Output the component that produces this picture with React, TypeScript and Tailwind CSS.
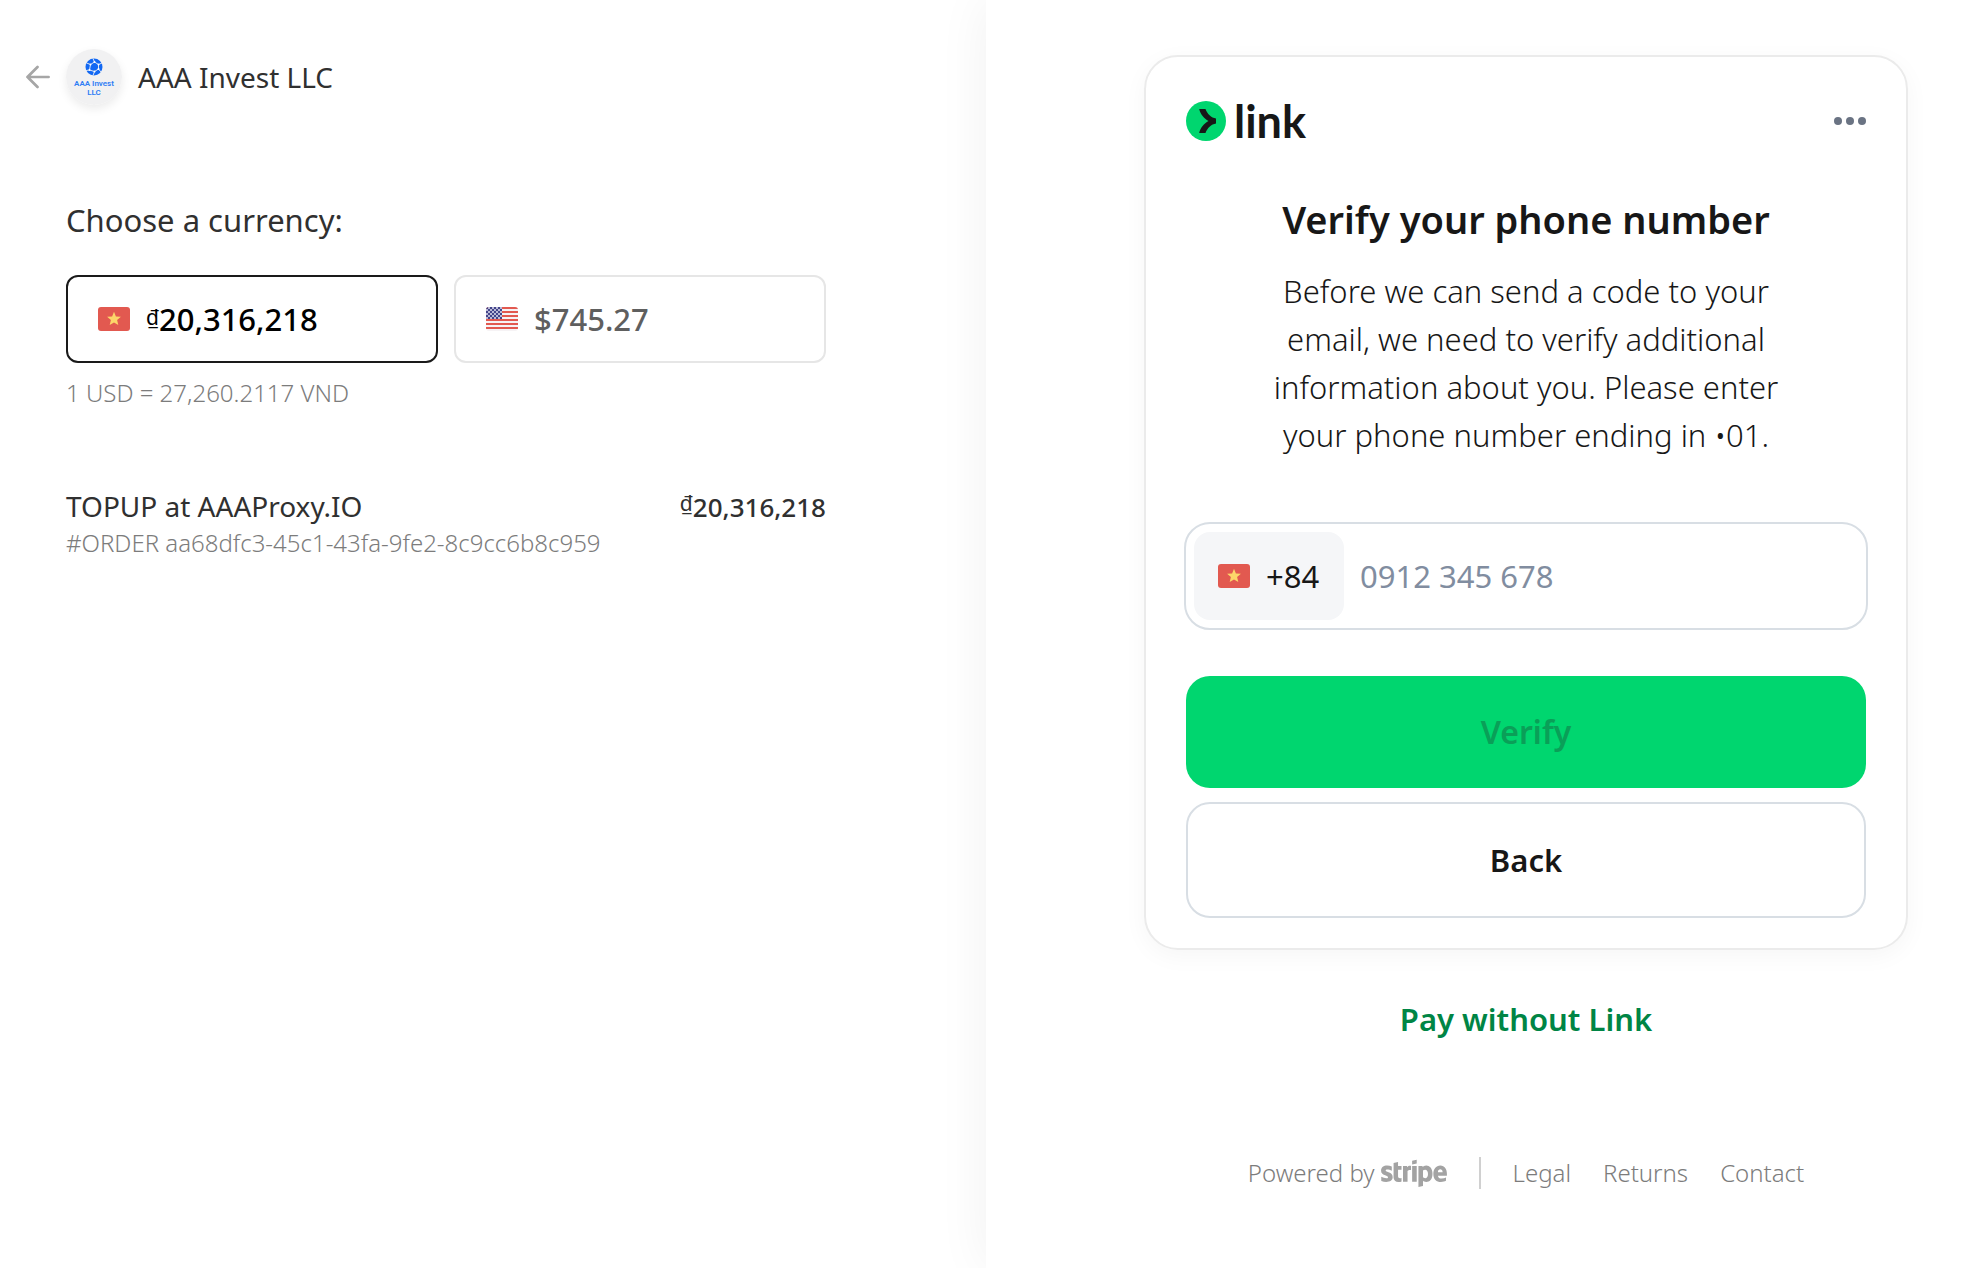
import { useState } from 'react';
import { FaStripe } from 'react-icons/fa6';

type Currency = 'vnd' | 'usd';

function VietnamFlag() {
  return (
    <svg width="32" height="24" viewBox="0 0 32 24" className="shrink-0" aria-hidden="true">
      <rect width="32" height="24" rx="3" fill="#e25950" />
      <path
        d="M16 4.800l1.900 4.700 5 .300-3.800 3.300 1.200 4.900L16 15.400l-4.300 2.600 1.200-4.900-3.800-3.300 5-.300z"
        fill="#fcd669"
      />
    </svg>
  );
}

function UsFlag() {
  return (
    <svg width="32" height="24" viewBox="0 0 32 24" className="shrink-0" aria-hidden="true">
      <defs>
        <clipPath id="us-flag">
          <rect width="32" height="24" rx="3" />
        </clipPath>
        <pattern id="us-stars" width="4" height="4" patternUnits="userSpaceOnUse">
          <rect width="4" height="4" fill="#43458b" />
          <rect x="0" y="2" width="2" height="2" fill="#b9bad6" />
          <rect x="2" y="0" width="2" height="2" fill="#b9bad6" />
        </pattern>
      </defs>
      <g clipPath="url(#us-flag)">
        <rect width="32" height="24" fill="#f6f3f5" />
        {[0, 4, 8, 12, 16, 20].map((y) => (
          <rect key={y} y={y} width="32" height="2" fill="#e25950" />
        ))}
        <rect width="16" height="12" fill="url(#us-stars)" />
      </g>
    </svg>
  );
}

function MerchantLogo() {
  return (
    <svg width="56" height="56" viewBox="0 0 56 56" aria-hidden="true">
      <circle cx="28" cy="28" r="28" fill="#f1f1f2" />
      <circle cx="28" cy="18" r="8.500" fill="#1268f3" />
      <g stroke="#f1f1f2" strokeWidth="0.900" fill="none">
        <path d="M24.500 15.500l4-2.500 4 2.500v4.500l-4 2.500-5-1.500z" />
        <path d="M24.500 15.500L20.500 14M28.500 13L27 9.500M32.500 15.500L36 14M32.500 20l2.500 3M28.500 22.500L27 26.500M23.500 21L20 21.500" />
      </g>
      <g fill="#fff">
        <circle cx="24.500" cy="15.500" r="1" />
        <circle cx="28.500" cy="13" r="1" />
        <circle cx="32.500" cy="15.500" r="1" />
        <circle cx="32.500" cy="20" r="1" />
        <circle cx="28.500" cy="22.500" r="1" />
        <circle cx="23.500" cy="21" r="1" />
      </g>
      <g fill="#2f7df5" fontFamily="Roboto, sans-serif" fontWeight="600" fontSize="8" textAnchor="middle">
        <text x="28" y="37">AAA Invest</text>
        <text x="28" y="46">LLC</text>
      </g>
    </svg>
  );
}

function Dong() {
  return <span className="align-[6px] text-[21px] leading-0 font-normal">₫</span>;
}

export default function App() {
  const [currency, setCurrency] = useState<Currency>('vnd');
  const [phone, setPhone] = useState('');

  const box = 'flex h-22 flex-1 items-center gap-4 rounded-xl border-2 px-[30px] text-[31px] font-medium';

  return (
    <div className="grid min-h-screen grid-cols-[986fr_977fr] overflow-hidden bg-white font-['Noto_Sans',sans-serif] text-[#303030]">
      {/* Order summary */}
      <main className="pt-[49px] pr-40 pl-[66px]">
        <header className="-ml-10 flex h-14 items-center">
          <a href="#back" aria-label="Back" className="mr-4 text-[#a6a6a6]">
            <svg width="24" height="24" viewBox="0 0 24 24" fill="none" stroke="currentColor" strokeWidth="2.700" strokeLinecap="round" strokeLinejoin="round">
              <path d="M11.500 2L1.500 12l10 10M1.500 12H22.600" />
            </svg>
          </a>
          <div className="mr-4 rounded-full shadow-[0_4px_10px_rgba(0,0,0,0.08)]">
            <MerchantLogo />
          </div>
          <span className="text-[28px] leading-9">AAA Invest LLC</span>
        </header>

        <h2 className="mt-[95px] text-[31px] leading-10">Choose a currency:</h2>
        <div className="mt-[35px] flex gap-4">
          <button
            type="button"
            onClick={() => setCurrency('vnd')}
            className={`${box} ${currency === 'vnd' ? 'border-[#1a1a1a] text-black' : 'border-[#e6e6e6] text-[#5f5f5f]'}`}
          >
            <VietnamFlag />
            <span><Dong />20,316,218</span>
          </button>
          <button
            type="button"
            onClick={() => setCurrency('usd')}
            className={`${box} ${currency === 'usd' ? 'border-[#1a1a1a] text-black' : 'border-[#e6e6e6] text-[#5f5f5f]'}`}
          >
            <UsFlag />
            <span>$745.27</span>
          </button>
        </div>
        <p className="mt-3.5 text-[24px] leading-8 font-light text-[#7c7c7c]">1 USD = 27,260.2117 VND</p>

        <div className="mt-[79px] flex items-baseline justify-between leading-9">
          <span className="text-[28px]">TOPUP at AAAProxy.IO</span>
          <span className="text-[26px] font-medium"><Dong />20,316,218</span>
        </div>
        <p className="text-[24px] leading-9 font-light text-[#7c7c7c]">
          #ORDER aa68dfc3-45c1-43fa-9fe2-8c9cc6b8c959
        </p>
      </main>

      {/* Link verification */}
      <section className="flex flex-col items-center pt-[55px] pr-[55px] pl-[158px] shadow-[0_0_50px_rgba(0,0,0,0.06)]">
        <div className="w-full rounded-[34px] border-2 border-[#ebebeb] px-10 pt-11 pb-[30px] shadow-[0_6px_24px_rgba(0,0,0,0.04)]">
          <div className="flex h-10 items-center justify-between">
            <div className="flex items-center gap-2 text-[#171717]">
              <svg width="40" height="40" viewBox="0 0 40 40" aria-hidden="true">
                <circle cx="20" cy="20" r="20" fill="#00d66f" />
                <path d="M19.500 8h-6.300c1.200 5.100 4.800 9.500 9.300 12-4.500 2.500-8.100 6.900-9.300 12h6.300c1.600-4.700 5.900-8.800 10.500-9.500v-5c-4.700-.700-8.900-4.800-10.500-9.500z" fill="#171717" />
              </svg>
              <span className="font-['Lato',sans-serif] text-[45px] leading-10 font-bold">link</span>
            </div>
            <button type="button" aria-label="More options">
              <svg width="32" height="8" viewBox="0 0 32 8" fill="#6a7383">
                <circle cx="4" cy="4" r="4" />
                <circle cx="16" cy="4" r="4" />
                <circle cx="28" cy="4" r="4" />
              </svg>
            </button>
          </div>

          <h1 className="mt-[54px] text-center text-[38px] leading-12 font-semibold text-[#171717]">
            Verify your phone number
          </h1>
          <p className="mx-auto mt-6 max-w-[540px] text-center text-[31px] leading-12 font-[350] text-[#171717]">
            Before we can send a code to your email, we need to verify additional information about you. Please enter your phone number ending in •01.
          </p>

          <div className="-mx-0.5 mt-[63px] flex h-27 items-center rounded-[26px] border-2 border-[#d8dee4] p-2">
            <button type="button" className="flex h-22 w-[150px] shrink-0 items-center gap-4 rounded-2xl bg-[#f5f6f8] pl-6 text-[31px] text-[#171717]">
              <VietnamFlag />
              +84
            </button>
            <input
              type="tel"
              aria-label="Phone number"
              placeholder="0912 345 678"
              value={phone}
              onChange={(e) => setPhone(e.target.value)}
              className="ml-4 min-w-0 flex-1 bg-transparent text-[31px] outline-none placeholder:text-[#818da0]"
            />
          </div>

          <button type="button" className="mt-[46px] h-28 w-full rounded-3xl bg-[#00d66f] text-[32px] font-semibold text-[#0a9f58]">
            Verify
          </button>
          <button type="button" className="mt-3.5 h-29 w-full rounded-3xl border-2 border-[#d8dee4] text-[31px] font-semibold text-[#171717]">
            Back
          </button>
        </div>

        <a href="#pay" className="mt-[45px] text-[31px] leading-12 font-semibold text-[#008545]">
          Pay without Link
        </a>

        <footer className="mt-28 flex items-center gap-8 text-[24px] leading-9 font-light text-[#7c7c7c]">
          <a href="#stripe" className="flex items-center gap-1.5">
            Powered by
            <FaStripe viewBox="0 116 640 272" className="h-7 w-[66px] text-[#a3a3a3]" title="stripe" />
          </a>
          <span className="h-8 w-0.5 bg-[#d0d0d0]" />
          <a href="#legal">Legal</a>
          <a href="#returns">Returns</a>
          <a href="#contact">Contact</a>
        </footer>
      </section>
    </div>
  );
}
